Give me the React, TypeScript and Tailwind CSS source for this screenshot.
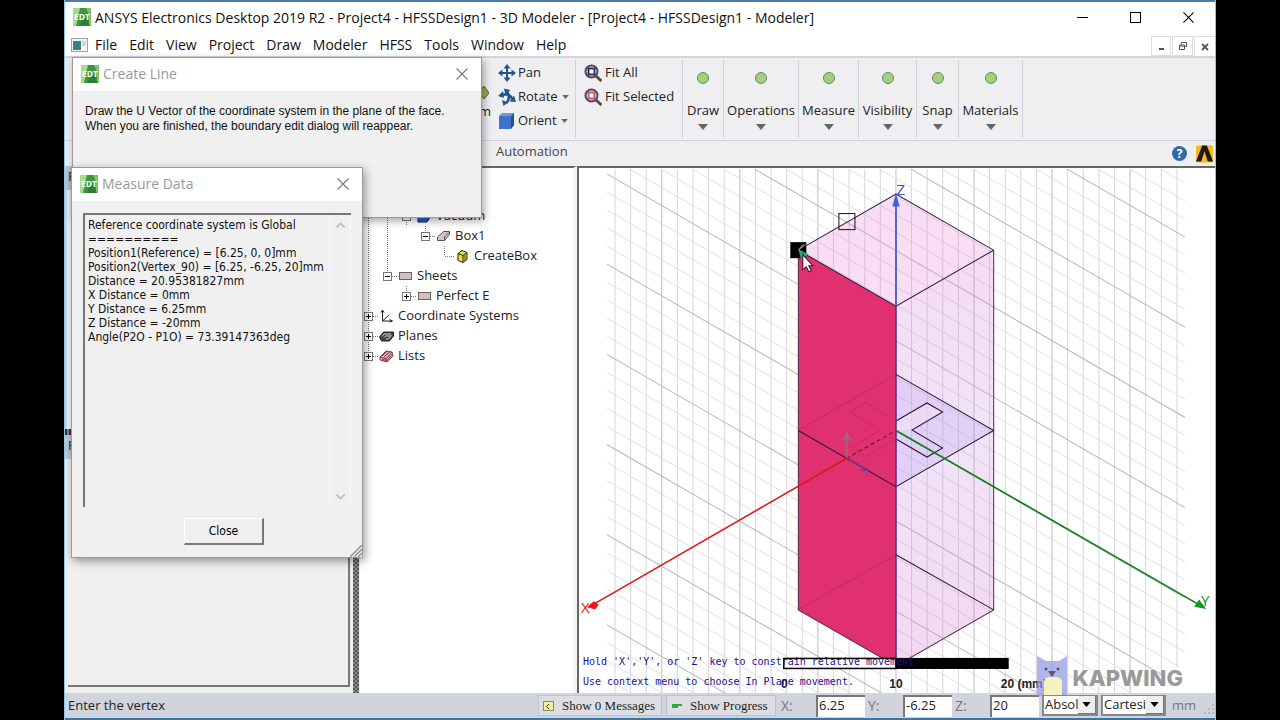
import React from "react";

const UI = "font-['Open_Sans','Noto_Sans',sans-serif]";

function EdtLogo() {
  return (
    <svg viewBox="0 0 18 18" className="h-[18px] w-[18px] shrink-0" aria-hidden="true">
      <rect width="18" height="18" fill="#7cc465" />
      <path d="M0 0h9L3 18H0z" fill="#a5dc8d" />
      <path d="M7 0h6l3 7v11H3z" fill="#3f9440" />
      <path d="M9 12l4-2 4 8H7z" fill="#2f7d33" />
      <text x="9" y="12" textAnchor="middle" fontSize="8.500" fontWeight="700" fill="#f2fff0" fontFamily="Open Sans, sans-serif">
        EDT
      </text>
    </svg>
  );
}

function CloseGlyph({ className }: { className: string }) {
  return (
    <svg viewBox="0 0 12 12" className={className} aria-hidden="true">
      <path d="M.5.5l11 11M11.5.5l-11 11" stroke="currentColor" fill="none" strokeWidth="1.1" />
    </svg>
  );
}

function DownTriangle({ className }: { className: string }) {
  return (
    <svg viewBox="0 0 10 6" className={className} aria-hidden="true">
      <path d="M0 0h10L5 6z" fill="currentColor" />
    </svg>
  );
}

function PanIcon() {
  return (
    <svg viewBox="0 0 18 18" className="h-[18px] w-[18px] shrink-0" aria-hidden="true">
      <path d="M9 3v12M3 9h12" stroke="#1f5590" strokeWidth="2" />
      <path d="M9 0l3.500 4.500h-7zM9 18l3.500-4.500h-7zM0 9l4.500-3.500v7zM18 9l-4.500-3.500v7z" fill="#1f5590" />
    </svg>
  );
}

function RotateIcon() {
  return (
    <svg viewBox="0 0 18 18" className="h-[18px] w-[18px] shrink-0" aria-hidden="true">
      <path d="M3 8c4-3 9-2 12 4M9 4c2.500 3 2.500 7-.5 11" stroke="#1f5590" strokeWidth="2.600" fill="none" />
      <path d="M0 8l5-5 1 7zM18 14l-6.500-.5 4.500-6zM6 .5l6.500 1.500-5 5zM4 12l6 2.500-4.500 3.500z" fill="#1f5590" />
    </svg>
  );
}

function OrientIcon() {
  return (
    <svg viewBox="0 0 18 18" className="h-[18px] w-[18px] shrink-0" aria-hidden="true">
      <path d="M1 4l3-3h12v12l-3 4H1z" fill="#6f98dc" />
      <path d="M13 4l3-3v12l-3 4z" fill="#234f9c" />
      <rect x="1" y="4" width="12" height="13" fill="#3f72cd" />
    </svg>
  );
}

function FitIcon({ inner }: { inner: string }) {
  return (
    <svg viewBox="0 0 18 18" className="h-[18px] w-[18px] shrink-0" aria-hidden="true">
      <path d="M12 12l5.500 5" stroke="#5c5232" strokeWidth="3" />
      <circle cx="7.500" cy="7.500" r="6" fill="#e9e6f5" stroke="#4a4663" strokeWidth="2" />
      <rect x="4.500" y="4.500" width="6" height="6" fill="#fff" stroke={inner} strokeWidth="1.800" />
    </svg>
  );
}

const menus = ["File", "Edit", "View", "Project", "Draw", "Modeler", "HFSS", "Tools", "Window", "Help"];

const groups = [
  { name: "Draw", width: "w-[41px]" },
  { name: "Operations", width: "w-[75px]" },
  { name: "Measure", width: "w-[60px]" },
  { name: "Visibility", width: "w-[58px]" },
  { name: "Snap", width: "w-[42px]" },
  { name: "Materials", width: "w-[64px]" },
];

function TitleBar() {
  return (
    <header className="flex h-[33px] shrink-0 items-center border-t-2 border-[#4f7ba6] bg-white pb-px pl-2">
      <EdtLogo />
      <h1 className="ml-1 flex-1 text-[14px] whitespace-nowrap text-[#111]">
        ANSYS Electronics Desktop 2019 R2 - Project4 - HFSSDesign1 - 3D Modeler - [Project4 - HFSSDesign1 - Modeler]
      </h1>
      <div className="flex items-center gap-[42px] pr-[21px] text-black">
        <button aria-label="Minimize" className="flex h-3 w-[11px] items-center">
          <span className="h-px w-full bg-black" />
        </button>
        <button aria-label="Maximize" className="h-[11px] w-[11px] border border-black" />
        <button aria-label="Close window" className="h-[11px] w-[11px]">
          <CloseGlyph className="h-[11px] w-[11px]" />
        </button>
      </div>
    </header>
  );
}

function MenuBar() {
  return (
    <nav className="flex h-[23px] shrink-0 items-center bg-white pl-[6px]">
      <svg viewBox="0 0 17 14" className="h-[14px] w-[17px]" aria-hidden="true">
        <rect x=".5" y=".5" width="16" height="13" fill="#f4f6f6" stroke="#9aa5a8" />
        <rect x="2" y="3" width="8" height="9" fill="#3f7f85" />
        <rect x="11" y="3" width="4" height="5" fill="#c9dcd8" />
      </svg>
      <div className="ml-[7px] flex flex-1 gap-3 text-[14px] text-[#111]">
        {menus.map((m) => (
          <button key={m}>{m}</button>
        ))}
      </div>
      <div className="flex h-full items-end text-[#555]">
        <button aria-label="Minimize document" className="flex h-5 w-5 items-center justify-center border border-[#ddd]">
          <span className="mt-[6px] h-[2px] w-[5px] bg-[#555]" />
        </button>
        <button aria-label="Restore document" className="ml-px flex h-5 w-[21px] items-center justify-center border border-[#ddd]">
          <svg viewBox="0 0 8 8" className="h-2 w-2" aria-hidden="true">
            <path d="M2.500 2.500v-2h5v4h-2M.5 3h5v4.500h-5zM.5 4h5" fill="none" stroke="#555" />
          </svg>
        </button>
        <button aria-label="Close document" className="ml-px flex h-5 w-[21px] items-center justify-center border-t border-l border-[#ddd]">
          <svg viewBox="0 0 8 8" className="h-2 w-2" aria-hidden="true">
            <path d="M1 1l6 6M7 1L1 7" stroke="#555" strokeWidth="1.800" />
          </svg>
        </button>
      </div>
    </nav>
  );
}

function Ribbon() {
  return (
    <section className="shrink-0 border-t-2 border-[#d4d5dc] bg-[#efeff1] text-[13px] text-[#222]">
      <div className="flex h-[83px] border-b border-[#cdd0d8] py-[2px]">
        <div className="flex w-[426px] shrink-0 flex-col items-end justify-center pt-2">
          <svg viewBox="0 0 16 18" className="mr-[2px] h-[18px] w-4" aria-hidden="true">
            <path d="M6 8l5-6 5 7-5 6z" fill="#a8a94f" stroke="#5a5c28" />
          </svg>
          <span>Zoom</span>
        </div>
        <div className="flex w-[85px] shrink-0 flex-col gap-[6px] border-r border-[#cfd2da] pt-1 pl-[7px]">
          <button className="flex h-[18px] items-center gap-[2px]">
            <PanIcon />
            Pan
          </button>
          <button className="flex h-[18px] items-center gap-[2px]">
            <RotateIcon />
            Rotate
            <DownTriangle className="ml-[2px] h-1 w-[7px] text-[#666]" />
          </button>
          <button className="flex h-[18px] items-center gap-[2px]">
            <OrientIcon />
            Orient
            <DownTriangle className="ml-[2px] h-1 w-[7px] text-[#666]" />
          </button>
        </div>
        <div className="flex w-[107px] shrink-0 flex-col gap-[6px] border-r border-[#cfd2da] pt-1 pl-2">
          <button className="flex h-[18px] items-center gap-[3px] whitespace-nowrap">
            <FitIcon inner="#24225c" />
            Fit All
          </button>
          <button className="flex h-[18px] items-center gap-[3px] whitespace-nowrap">
            <FitIcon inner="#c64b55" />
            Fit Selected
          </button>
        </div>
        {groups.map((g) => (
          <button
            key={g.name}
            className={`${g.width} flex shrink-0 flex-col items-center border-r border-[#cfd2da] pt-3`}
          >
            <span className="h-3 w-3 shrink-0 rounded-full border border-[#6d8a5c] bg-[#a3d07f]" />
            <span className="mt-[17px] leading-[18px]">{g.name}</span>
            <DownTriangle className="mt-[5px] h-[6px] w-[10px] text-[#666]" />
          </button>
        ))}
      </div>
      <div className="flex h-[25px] items-center justify-between pr-[2px] pl-[431px] text-[#444]">
        <button className="-mt-1">Automation</button>
        <div className="flex items-center gap-[9px]">
          <button aria-label="Help topics" className="flex h-[15px] w-[15px] items-center justify-center rounded-full bg-[#2f69a8] text-[12px] font-bold text-white">
            ?
          </button>
          <svg viewBox="0 0 18 18" className="h-[18px] w-[17px]" aria-hidden="true">
            <rect width="18" height="18" rx="1" fill="#f6b921" />
            <path d="M6.500 0h5L18 17h-5.500L9 6 5.500 17H0z" fill="#1c1a12" />
          </svg>
        </div>
      </div>
    </section>
  );
}

function Connector({ kind }: { kind: string }) {
  const dots = { stroke: "#777", strokeWidth: 1, strokeDasharray: "1 1" };
  return (
    <svg viewBox="0 0 19 20" className="h-5 w-[19px] shrink-0" aria-hidden="true">
      {kind !== "blank" && <path d={kind === "end" || kind === "minusEnd" || kind === "plusEnd" ? "M8.500 0v10" : "M8.500 0v20"} {...dots} />}
      {kind !== "line" && kind !== "blank" && <path d="M9 10.500h9" {...dots} />}
      {(kind.startsWith("plus") || kind.startsWith("minus")) && (
        <g>
          <rect x="4.500" y="6.500" width="8" height="8" fill="#fff" stroke="#777" />
          <path d={kind.startsWith("plus") ? "M6 10.500h5M8.500 8v5" : "M6 10.500h5"} stroke="#000" />
        </g>
      )}
    </svg>
  );
}

function TreeIcon({ name }: { name: string }) {
  return (
    <svg viewBox="0 0 15 14" className="h-[14px] w-[15px] shrink-0" aria-hidden="true">
      {name === "vacuum" && <path d="M1 9l4-6h9v4l-4 6H1z" fill="#1f5fe0" stroke="#123" />}
      {name === "box" && (
        <g>
          <path d="M1.500 8l6-5.500h6v3l-5 6h-7z" fill="#d8c3cb" stroke="#555" />
          <path d="M8.500 8l5-5M8.500 8v3.500" stroke="#555" />
        </g>
      )}
      {name === "create" && (
        <g>
          <path d="M3 4.500l4-3 5 2v7l-4 3-5-2z" fill="#e8e52e" stroke="#222" />
          <path d="M3 4.500l5 2 4-3M8 6.500v7" stroke="#222" fill="none" />
          <path d="M8.500 7l3-2.500v6l-3 2.500z" fill="#8f8d2a" />
        </g>
      )}
      {name === "sheet" && <rect x="1.500" y="3.500" width="12" height="7" fill="#d9bcc3" stroke="#665" />}
      {name === "axes" && (
        <g stroke="#222" fill="none">
          <path d="M3.500 1v11h9M3.500 12L10 6" />
          <path d="M2 3.500L3.500 1 5 3.500M10.500 10.500l3 1.500-3 1" />
        </g>
      )}
      {name === "planes" && (
        <g>
          <path d="M.5 8l4-5h10v4l-4 5H2.500z" fill="#444" stroke="#222" />
          <path d="M3 7.500l2-2.500h7M5 8.500l1.500-1.500h5M7 10h2.500l3-4" fill="none" stroke="#ccc" />
        </g>
      )}
      {name === "lists" && (
        <g stroke="#7b3f4c">
          <path d="M1 8l6-6 6 1 1 4-6 6-7-2z" fill="#e0aeb8" />
          <path d="M1 8l6 2 6-7M7 10l1 3M3 7l5-5M5 8l6-5.500M3 10.500l5 1 5-6" fill="none" />
        </g>
      )}
    </svg>
  );
}

const tree = [
  { label: "Vacuum", icon: "vacuum", cells: ["line", "line", "minus"] },
  { label: "Box1", icon: "box", cells: ["line", "line", "blank", "minusEnd"] },
  { label: "CreateBox", icon: "create", cells: ["line", "line", "blank", "blank", "end"] },
  { label: "Sheets", icon: "sheet", cells: ["line", "minusEnd"] },
  { label: "Perfect E", icon: "sheet", cells: ["line", "blank", "plusEnd"] },
  { label: "Coordinate Systems", icon: "axes", cells: ["plus"] },
  { label: "Planes", icon: "planes", cells: ["plus"] },
  { label: "Lists", icon: "lists", cells: ["plusEnd"] },
];

function ModelTree() {
  return (
    <aside className="w-[217px] shrink-0 border-t-2 border-r-4 border-t-[#666] border-r-[#f4f4f4] bg-white pt-[38px] text-[13px] text-[#222]">
      <ul>
        {tree.map((t) => (
          <li key={t.label} className="flex h-5 items-center">
            {t.cells.map((c, i) => (
              <Connector key={i} kind={c} />
            ))}
            <TreeIcon name={t.icon} />
            <span className="ml-1 whitespace-nowrap">{t.label}</span>
          </li>
        ))}
      </ul>
    </aside>
  );
}

const verticals = Array.from({ length: 37 }, (_, i) => ({ x: 615 + i * 15.58, major: i % 5 === 3 }));
const diagonals = Array.from({ length: 48 }, (_, i) => ({ y: 174 + (i - 18) * 18, major: (i - 18) % 5 === 0 }));

function Viewport() {
  return (
    <main className="relative min-w-0 flex-1 border-t-2 border-l-2 border-[#666] bg-white">
      <svg viewBox="578 168 637 524" preserveAspectRatio="xMidYMid slice" className="absolute inset-0 h-full w-full" role="img" aria-label="3D model view">
        <defs>
          <clipPath id="gridArea">
            <path d="M607 169H1184V662L1130 692H607z" />
          </clipPath>
          <linearGradient id="side" x1="0" y1="0" x2="0" y2="1">
            <stop offset="0" stopColor="#d878cc" stopOpacity=".26" />
            <stop offset=".45" stopColor="#c88ce0" stopOpacity=".24" />
            <stop offset="1" stopColor="#d070cc" stopOpacity=".27" />
          </linearGradient>
        </defs>
        <g clipPath="url(#gridArea)" fill="none">
          {verticals.map((v) => (
            <path key={v.x} d={`M${v.x} 169V692`} stroke={v.major ? "#bcbcc4" : "#d6d6dc"} />
          ))}
          {diagonals.map((d) => (
            <path key={d.y} d={`M607 ${d.y}l577 333`} stroke={d.major ? "#b8b8c0" : "#dcdce0"} strokeWidth={d.major ? 1 : 0.9} />
          ))}
        </g>
        <path d="M895.500 194L993 250L895.500 306L798 250z" fill="#ea84dc" fillOpacity=".28" />
        <path d="M895.500 306L993 250V609L895.500 665z" fill="url(#side)" />
        <path d="M895.500 374L993 430L895.500 486z" fill="#a88cf0" fillOpacity=".22" />
        <path d="M895.500 420L926.500 402.500L942 411.500L911.500 429.500L895.500 430z" fill="#f6e6f4" fillOpacity=".5" />
        <path d="M798 250L895.500 306V665L798 609z" fill="#e0306f" />
        <g fill="none" stroke="#2c1638" strokeWidth="1">
          <path d="M798 250L895.500 194L993 250L895.500 306z" />
          <path d="M993 250V609L895.500 665L798 609V250" stroke="#5b2350" />
          <path d="M895.500 374L993 430L895.500 486L798 430" />
          <path d="M895.500 554L993 609" />
          <path d="M895.500 420.500L926.500 402.500L942 411.500L911.500 429.500L942 447.500L926.500 456.500L895.500 438.500" />
        </g>
        <g fill="none" stroke="#b52a64" strokeWidth=".8">
          <path d="M798 430L895.500 374M798 609L895.500 554" />
          <path d="M887 415L865 402.500L849 411.500L879 429.500L851 447.500L865 456.500L895.500 438.500" strokeDasharray="3 1" />
        </g>
        <path d="M846 458L895.500 430" stroke="#5a1238" strokeDasharray="4 3" />
        <path d="M895.500 306V657" stroke="#5a2a86" strokeWidth="1.500" />
        <path d="M895.500 205V306" stroke="#3452bd" strokeWidth="1.600" />
        <path d="M895.500 195l3 11h-6z" fill="#3c63d8" stroke="#3c63d8" />
        <path d="M846 458L590 605.500" stroke="#e01818" strokeWidth="1.600" />
        <path d="M588 606l6-5 4 3-3 4z" fill="#f01515" stroke="#f01515" />
        <path d="M895.500 430L1200 605" stroke="#0c8014" strokeWidth="1.600" />
        <path d="M1204 607.500l-6-8-4 6z" fill="#12952a" stroke="#12952a" />
        <path d="M846.500 458V434M843.500 440l3-7 4 7" stroke="#8b7680" strokeWidth="1.400" fill="none" />
        <path d="M847 458L868 470M861 465.500l9 5-10-1" stroke="#6a3e84" fill="none" />
        <g fontFamily="Open Sans, sans-serif" fontSize="15">
          <text x="896" y="195" fill="#3a55c4">Z</text>
          <text x="581" y="612" fill="#e81818">X</text>
          <text x="1200" y="605" fill="#0e9018">Y</text>
        </g>
        <rect x="790" y="242" width="16" height="16" fill="#000" />
        <path d="M798 250l8-6M798 250l5-6" stroke="#888" />
        <rect x="838.500" y="213.500" width="16" height="16" fill="none" stroke="#111" />
        <path d="M798 249l10 5-7 6z" fill="#1eae7d" />
        <path d="M802.500 254.500v15l3.500-3 2.500 5 2.500-1-2.500-5h4z" fill="#fff" stroke="#3a1024" />
        <rect x="783.500" y="657.500" width="112" height="10" fill="#fff" stroke="#000" strokeWidth="1.500" />
        <rect x="895" y="657" width="113" height="11" fill="#000" />
        <g fontFamily="Liberation Sans, sans-serif" fontSize="12" fontWeight="700" fill="#222" textAnchor="middle">
          <text x="784" y="687">0</text>
          <text x="895.500" y="687">10</text>
          <text x="1023" y="687">20 (mm)</text>
        </g>
      </svg>
      <div className="absolute bottom-px left-1 font-['DejaVu_Sans_Mono',monospace] text-[10px] leading-5 whitespace-nowrap text-[#1d0f93]">
        <p>Hold 'X','Y', or 'Z' key to constrain relative movement</p>
        <p>Use context menu to choose In Plane movement.</p>
      </div>
      <div className="absolute right-8 -bottom-[3px] flex items-center gap-[5px]">
        <svg viewBox="0 0 32 40" className="h-10 w-8" aria-hidden="true">
          <path d="M1 0l9 5h13l8-5v40H1z" fill="#8f96e4" fillOpacity=".7" />
          <path d="M8 40V27q0-6 6-6h6q6 0 6 6v13z" fill="#f6f2bd" />
          <circle cx="10" cy="13" r="1.500" fill="#555" />
          <circle cx="22" cy="13" r="1.500" fill="#555" />
          <path d="M12 15h8l-4 6z" fill="#555a66" />
        </svg>
        <span className="pt-1 font-['Inter',sans-serif] text-[22px] font-extrabold text-[#999]">KAPWING</span>
      </div>
    </main>
  );
}

function DockPanels() {
  return (
    <aside className="flex w-[295px] shrink-0 bg-[#efefef] text-[13px] text-[#222]">
      <div className="flex min-w-0 flex-1 flex-col">
        <div className="h-6 bg-[#c4c6d0] pl-[3px] leading-5" title="Project Manager">P</div>
        <div className="h-[239px] border-l-2 border-[#c8d9e6] bg-[#f4f6f8]" />
        <div className="h-[6px] bg-[repeating-linear-gradient(90deg,#333_0_2px,#888_2px_4px)]" />
        <div className="h-6 bg-[#c4c6d0] pl-[3px] leading-5" title="Properties">P</div>
        <div className="mr-[3px] mb-[6px] ml-[3px] flex-1 border-r-2 border-b-2 border-[#777] bg-[#efefef]" />
      </div>
      <div className="mr-px w-[6px] bg-[#777] bg-[repeating-conic-gradient(#555_0_25%,#8c8c8c_0_50%)] bg-[length:4px_4px]" />
    </aside>
  );
}

function CoordField({ label, value }: { label: string; value: string }) {
  return (
    <label className="flex items-center text-[14px] text-[#777]">
      <span className="w-[37px] pl-[2px]">{label}</span>
      <input
        defaultValue={value}
        className="h-[22px] w-[49px] border-t-2 border-l-2 border-[#777] bg-white pb-[3px] pl-px text-[13px] leading-4 text-[#222]"
      />
    </label>
  );
}

function DropBox({ label, value, width }: { label: string; value: string; width: string }) {
  return (
    <div className={`${width} relative h-[21px] border-t border-r-2 border-b-2 border-l-2 border-[#888] bg-white`}>
      <select aria-label={label} className="block h-[17px] w-full appearance-none bg-transparent pl-px text-[13px] leading-[17px] text-[#222]">
        <option>{value}</option>
      </select>
      <span className="pointer-events-none absolute inset-y-0 right-0 flex w-[18px] items-center justify-center border-r border-b border-[#777] bg-[#eee]">
        <DownTriangle className="h-[5px] w-[9px] text-black" />
      </span>
    </div>
  );
}

function StatusBar() {
  const button = "flex h-[21px] items-center border border-[#c0c3cc] bg-[#dcdee3] font-['Liberation_Serif',serif] text-[13px] whitespace-nowrap text-[#222]";
  return (
    <footer className="flex h-[27px] shrink-0 items-center border-b-2 border-[#3577ad] bg-[#d1d4dd] pl-[3px]">
      <p className="flex-1 text-[13px] whitespace-nowrap text-[#222]">Enter the vertex</p>
      <button className={`${button} w-[124px] gap-[7px] pl-1`}>
        <svg viewBox="0 0 12 12" className="h-3 w-3" aria-hidden="true">
          <rect x=".5" y="1.500" width="10" height="9" fill="#f3eda2" stroke="#8f8a50" />
          <path d="M6 4L3.500 6.500 6 9" stroke="#333" fill="none" />
        </svg>
        Show 0 Messages
      </button>
      <button className={`${button} ml-1 w-[110px] gap-[8px] pl-[5px]`}>
        <svg viewBox="0 0 10 4" className="h-1 w-[10px]" aria-hidden="true">
          <path d="M0 0h10v2H6v2H0z" fill="#2eaa3a" />
        </svg>
        Show Progress
      </button>
      <div className="ml-[3px] flex items-center gap-px">
        <CoordField label="X:" value="6.25" />
        <CoordField label="Y:" value="-6.25" />
        <CoordField label="Z:" value="20" />
      </div>
      <div className="ml-[3px] flex items-center gap-[3px]">
        <DropBox label="Coordinate mode" value="Absol" width="w-[56px]" />
        <DropBox label="Coordinate system" value="Cartesi" width="w-[65px]" />
      </div>
      <span className="flex w-[49px] items-end justify-between pl-[6px] text-[13px] text-[#777]">
        mm
        <svg viewBox="0 0 12 12" className="h-3 w-3" aria-hidden="true">
          <path d="M9 1h2v2H9zM5 5h2v2H5zM9 5h2v2H9zM1 9h2v2H1zM5 9h2v2H5zM9 9h2v2H9z" fill="#b4b7c0" />
        </svg>
      </span>
    </footer>
  );
}

function DialogTitle({ text }: { text: string }) {
  return (
    <div className="flex h-[33px] items-center bg-white pr-[13px] pb-[2px] pl-2 text-[14px] text-[#999]">
      <EdtLogo />
      <h2 className="ml-1 flex-1">{text}</h2>
      <button aria-label={`Close ${text}`}>
        <CloseGlyph className="h-3 w-3 text-[#777]" />
      </button>
    </div>
  );
}

function Dialogs() {
  return (
    <>
      <section role="dialog" aria-label="Create Line" className="absolute top-[57px] left-[7px] h-[161px] w-[410px] border border-[#9a9a9a] bg-[#f0f0f0] shadow-[2px_3px_8px_rgba(0,0,0,0.35)]">
        <DialogTitle text="Create Line" />
        <p className="px-3 pt-[13px] font-['Liberation_Sans',sans-serif] text-[12px] leading-[15px] whitespace-nowrap text-[#111]">
          Draw the U Vector of the coordinate system in the plane of the face.
          <br />
          When you are finished, the boundary edit dialog will reappear.
        </p>
      </section>
      <section role="dialog" aria-label="Measure Data" className="absolute top-[167px] left-[6px] flex h-[391px] w-[292px] flex-col border border-[#9a9a9a] bg-[#f0f0f0] shadow-[2px_3px_9px_rgba(0,0,0,0.4)]">
        <DialogTitle text="Measure Data" />
        <div className="mx-[11px] mt-3 flex h-[294px] border-t-2 border-l-2 border-[#777] pl-[3px] font-['DejaVu_Sans_Condensed','DejaVu_Sans',sans-serif] text-[12px] leading-[14px] whitespace-nowrap text-[#111]">
          <div className="flex-1 pt-[3px]">
            <p>Reference coordinate system is Global</p>
            <p>==========</p>
            <p>Position1(Reference) = [6.25, 0, 0]mm</p>
            <p>Position2(Vertex_90) = [6.25, -6.25, 20]mm</p>
            <p>Distance = 20.95381827mm</p>
            <p>X Distance = 0mm</p>
            <p>Y Distance = 6.25mm</p>
            <p>Z Distance = -20mm</p>
            <p>Angle(P2O - P1O) = 73.39147363deg</p>
          </div>
          <div className="flex w-[22px] flex-col items-center justify-between border-x border-[#f8f8f8] py-[7px]">
            <svg viewBox="0 0 9 6" className="h-[6px] w-[9px]" aria-hidden="true">
              <path d="M.5 5.500l4-4 4 4" stroke="#bbb" strokeWidth="1.600" fill="none" />
            </svg>
            <svg viewBox="0 0 9 6" className="h-[6px] w-[9px]" aria-hidden="true">
              <path d="M.5.5l4 4 4-4" stroke="#bbb" strokeWidth="1.600" fill="none" />
            </svg>
          </div>
        </div>
        <button className="mt-[11px] ml-[112px] h-[27px] w-[80px] border-t border-r-2 border-b-2 border-l border-t-white border-r-[#777] border-b-[#777] border-l-white bg-[#f0f0f0] font-['DejaVu_Sans_Condensed','DejaVu_Sans',sans-serif] text-[12px] text-black">
          Close
        </button>
        <svg viewBox="0 0 12 12" className="absolute right-0 bottom-0 h-3 w-3" aria-hidden="true">
          <path d="M0 12L12 0M4 12l8-8M8 12l4-4" stroke="#888" strokeWidth="1.300" />
        </svg>
      </section>
    </>
  );
}

export default function App() {
  return (
    <div className={`${UI} h-screen bg-black px-16`}>
      <div className="relative flex h-full flex-col overflow-hidden border-x border-[#8fc3e6] bg-[#efefef]">
        <TitleBar />
        <MenuBar />
        <Ribbon />
        <div className="flex min-h-0 flex-1">
          <DockPanels />
          <ModelTree />
          <Viewport />
        </div>
        <StatusBar />
        <Dialogs />
      </div>
    </div>
  );
}
